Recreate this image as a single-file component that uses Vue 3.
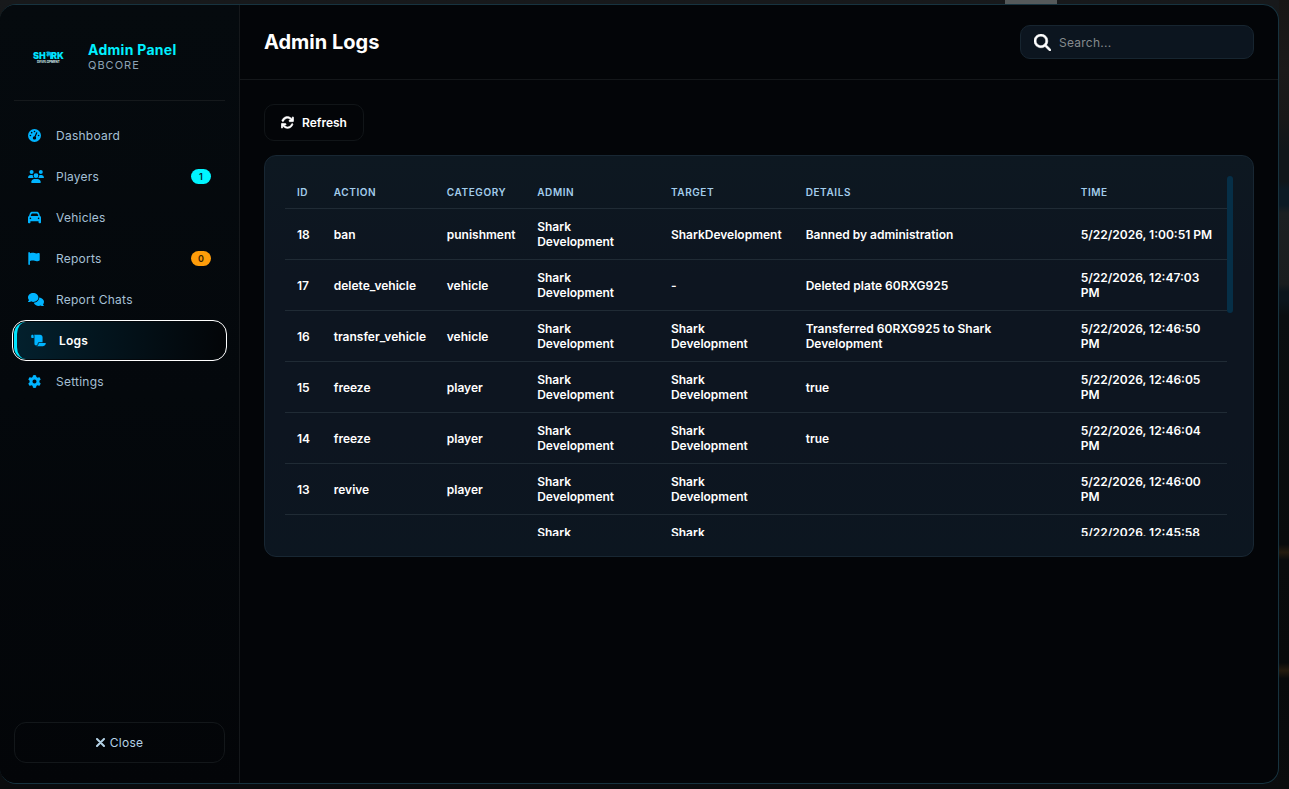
<script setup>
import { ref, computed } from 'vue'

const search = ref('')
const active = ref('Logs')

const nav = [
  { label: 'Dashboard', icon: 'gauge' },
  { label: 'Players', icon: 'users', badge: 1, tone: 'cyan' },
  { label: 'Vehicles', icon: 'car' },
  { label: 'Reports', icon: 'flag', badge: 0, tone: 'orange' },
  { label: 'Report Chats', icon: 'chats' },
  { label: 'Logs', icon: 'scroll' },
  { label: 'Settings', icon: 'gear' },
]

const columns = ['ID', 'Action', 'Category', 'Admin', 'Target', 'Details', 'Time']

const shark = 'Shark Development'
const logs = [
  [18, 'ban', 'punishment', shark, 'SharkDevelopment', 'Banned by administration', '5/22/2026, 1:00:51 PM'],
  [17, 'delete_vehicle', 'vehicle', shark, '-', 'Deleted plate 60RXG925', '5/22/2026, 12:47:03 PM'],
  [16, 'transfer_vehicle', 'vehicle', shark, shark, 'Transferred 60RXG925 to Shark Development', '5/22/2026, 12:46:50 PM'],
  [15, 'freeze', 'player', shark, shark, 'true', '5/22/2026, 12:46:05 PM'],
  [14, 'freeze', 'player', shark, shark, 'true', '5/22/2026, 12:46:04 PM'],
  [13, 'revive', 'player', shark, shark, '', '5/22/2026, 12:46:00 PM'],
  [12, 'warn', 'player', shark, shark, '', '5/22/2026, 12:45:58 PM'],
]

const rows = computed(() => {
  const q = search.value.trim().toLowerCase()
  return q ? logs.filter((r) => r.join(' ').toLowerCase().includes(q)) : logs
})
</script>

<template>
  <div class="scene">
    <div class="panel">
      <aside class="sidebar">
        <header class="brand">
          <svg class="logo" viewBox="0 0 48 48" aria-hidden="true">
            <text x="9" y="27" class="logo-main">SH</text>
            <path d="M22 20c3-1 6 0 6 2v5h-2c0-2 0-3-1-4l-1 2-2-2 1-1z" fill="#00b8e6" />
            <text x="27" y="27" class="logo-main">RK</text>
            <text x="13" y="31" class="logo-sub">DEVELOPMENT</text>
          </svg>
          <div class="brand-text">
            <div class="brand-name">Admin Panel</div>
            <div class="brand-sub">QBCORE</div>
          </div>
        </header>

        <nav class="nav">
          <button
            v-for="item in nav"
            :key="item.label"
            type="button"
            class="nav-item"
            :class="{ active: active === item.label }"
            @click="active = item.label"
          >
            <span class="nav-icon">
              <svg v-if="item.icon === 'gauge'" width="13" height="13" viewBox="0 0 512 512"><path fill-rule="evenodd" d="M0 256a256 256 0 1 1 512 0A256 256 0 1 1 0 256zM288 96a32 32 0 1 0-64 0 32 32 0 1 0 64 0zM256 416c35 0 64-29 64-64 0-17-7-33-18-45l64-147c5-12 0-26-12-31s-26 0-32 12l-64 147c-36 0-66 28-66 64s29 64 64 64zM176 144a32 32 0 1 0-64 0 32 32 0 1 0 64 0zM96 288a32 32 0 1 0 0-64 32 32 0 1 0 0 64zm352-32a32 32 0 1 0-64 0 32 32 0 1 0 64 0z" /></svg>
              <svg v-else-if="item.icon === 'users'" width="16" height="13" viewBox="0 0 640 512"><path d="M144 0a80 80 0 1 1 0 160A80 80 0 1 1 144 0zM512 0a80 80 0 1 1 0 160A80 80 0 1 1 512 0zM0 299c0-59 48-107 107-107h43c16 0 31 4 44 10-1 7-2 14-2 22 0 38 17 72 43 96H21c-12 0-21-10-21-21zM405 320c27-24 43-58 43-96 0-8-1-15-2-22 14-6 29-10 44-10h43c59 0 107 48 107 107 0 12-10 21-21 21zM224 224a96 96 0 1 1 192 0 96 96 0 1 1-192 0zM128 485c0-73 60-133 133-133h117c74 0 134 60 134 133 0 15-12 27-27 27H155c-15 0-27-12-27-27z" /></svg>
              <svg v-else-if="item.icon === 'car'" width="13" height="13" viewBox="0 0 512 512"><path fill-rule="evenodd" d="M135 117l-30 75h302l-30-75c-4-12-16-21-30-21H165c-14 0-26 9-30 21zM40 197l36-104c14-37 49-61 89-61h182c40 0 75 24 89 61l36 104c24 10 40 32 40 59v192c0 18-14 32-32 32h-32c-18 0-32-14-32-32v-48H96v48c0 18-14 32-32 32H32c-18 0-32-14-32-32V256c0-27 16-49 40-59zM128 288a32 32 0 1 0-64 0 32 32 0 1 0 64 0zm288 32a32 32 0 1 0 0-64 32 32 0 1 0 0 64z" /></svg>
              <svg v-else-if="item.icon === 'flag'" width="12" height="13" viewBox="0 0 448 512"><path d="M64 32C64 14 50 0 32 0S0 14 0 32v448c0 18 14 32 32 32s32-14 32-32V352l64-16c41-10 85-6 123 13 44 22 96 25 142 8l35-13c12-5 21-17 21-30V66c0-23-24-38-45-28l-10 5c-46 23-100 23-147 0-35-18-76-22-114-13L64 48V32z" /></svg>
              <svg v-else-if="item.icon === 'chats'" width="16" height="13" viewBox="0 0 640 512"><path d="M208 352c115 0 208-79 208-176S323 0 208 0 0 79 0 176c0 39 15 74 40 103-4 9-9 18-14 25-5 8-10 14-14 18l-6 6c-6 5-8 12-5 19s8 11 15 11c29 0 57-8 81-17 12-5 23-10 33-16 24 17 50 27 78 27z" /><path d="M448 176c0 112-99 196-219 207 25 75 108 129 203 129 28 0 54-5 78-13 10 6 21 11 33 16 24 9 52 17 81 17 7 0 13-5 15-11s0-14-5-19l-6-6c-4-4-9-10-14-18-5-7-10-16-14-25 25-29 40-64 40-103 0-93-86-169-195-176 2 7 3 13 3 24z" /></svg>
              <svg v-else-if="item.icon === 'scroll'" width="15" height="13" viewBox="0 0 576 512"><path d="M0 80v48c0 18 14 32 32 32h64V80c0-27-22-48-48-48S0 53 0 80zM112 32c10 13 16 30 16 48v304c0 35 29 64 64 64s64-29 64-64v-5c0-33 26-59 59-59h133V128c0-53-43-96-96-96zM464 480c62 0 112-50 112-112 0-9-7-16-16-16H315c-15 0-27 12-27 27v5c0 53-43 96-96 96z" /></svg>
              <svg v-else width="13" height="13" viewBox="0 0 512 512"><path fill-rule="evenodd" d="M496 167c3 8 0 18-6 23l-43 40a195 195 0 0 1 0 52l43 40c6 5 9 15 6 23-5 12-10 23-16 34l-5 8c-6 11-14 22-22 32-5 7-15 9-23 6l-56-17c-13 10-28 19-44 25l-12 57c-2 8-9 15-17 16a258 258 0 0 1-90 0c-8-1-15-8-17-16l-12-57c-16-6-31-15-44-25l-56 17c-8 3-18 1-23-6-8-10-16-21-22-32l-5-8c-6-11-11-22-16-34-3-8 0-18 6-23l43-40a195 195 0 0 1 0-52l-43-40c-6-5-9-15-6-23 5-12 10-23 16-34l5-8c6-11 14-22 22-32 5-7 15-9 23-6l56 17c13-10 28-19 44-25l12-57c2-8 9-15 17-16a258 258 0 0 1 90 0c8 1 15 8 17 16l12 57c16 6 31 15 44 25l56-17c8-3 18-1 23 6 8 10 16 21 22 32l5 8c6 11 11 22 16 34zM256 336a80 80 0 1 0 0-160 80 80 0 1 0 0 160z" /></svg>
            </span>
            <span class="nav-label">{{ item.label }}</span>
            <span v-if="item.tone" class="badge" :class="item.tone">{{ item.badge }}</span>
          </button>
        </nav>

        <button type="button" class="close">
          <svg width="9" height="9" viewBox="0 0 9 9" aria-hidden="true"><path d="M1 1l7 7M8 1L1 8" stroke="currentColor" stroke-width="2" stroke-linecap="round" /></svg>
          Close
        </button>
      </aside>

      <main class="main">
        <header class="topbar">
          <h1>Admin Logs</h1>
          <label class="search">
            <svg width="17" height="17" viewBox="0 0 512 512" aria-hidden="true"><path fill-rule="evenodd" d="M416 208c0 46-15 88-40 123l127 126c12 13 12 33 0 46s-33 12-46 0L331 376a208 208 0 1 1 85-168zM208 352a144 144 0 1 0 0-288 144 144 0 1 0 0 288z" stroke="currentColor" stroke-width="16" /></svg>
            <input v-model="search" type="text" placeholder="Search..." aria-label="Search" />
          </label>
        </header>

        <section class="content">
          <button type="button" class="refresh">
            <svg width="13" height="13" viewBox="0 0 512 512" aria-hidden="true"><path d="M105 203c9-25 23-48 43-68 60-60 156-60 216-1l25 26h-47c-18 0-32 14-32 32s14 32 32 32h126c18 0 32-14 32-32V64c0-18-14-32-32-32s-32 14-32 32v52l-27-27C322 1 176 1 88 89c-24 25-42 54-53 85-6 17 3 35 19 41s35-4 51-12zM39 289c-18 0-32 14-32 32v127c0 18 14 32 32 32s32-14 32-32v-52l27 27c88 88 231 88 319 0 24-25 42-54 53-85 6-17-3-35-19-41s-35 3-41 19c-9 25-23 48-43 68-60 60-156 60-216 1l-25-26h47c18 0 32-14 32-32s-14-32-32-32z" stroke="currentColor" stroke-width="20" /></svg>
            Refresh
          </button>

          <div class="card">
            <div class="table-scroll">
              <table>
                <colgroup>
                  <col class="c-id" /><col class="c-action" /><col class="c-category" /><col class="c-admin" />
                  <col class="c-target" /><col class="c-details" /><col />
                </colgroup>
                <thead>
                  <tr>
                    <th v-for="c in columns" :key="c" scope="col">{{ c }}</th>
                  </tr>
                </thead>
                <tbody>
                  <tr v-for="row in rows" :key="row[0]">
                    <td v-for="(cell, i) in row" :key="i">{{ cell }}</td>
                  </tr>
                </tbody>
              </table>
            </div>
            <div class="track" aria-hidden="true"><div class="thumb"></div></div>
          </div>
        </section>
      </main>
    </div>
  </div>
</template>

<style>
body {
  background: #0b0d0f;
}
</style>

<style scoped>
* {
  box-sizing: border-box;
}
.scene {
  display: flex;
  height: 100vh;
  padding: 4px 10px 5px 0;
  font-family: Inter, "Liberation Sans", sans-serif;
  color: #fff;
  background:
    linear-gradient(90deg, transparent 78%, #555a5b 78%, #555a5b 82%, transparent 82%) top left / 100% 4px no-repeat,
    linear-gradient(180deg, #171615 0, #1b1a1a 9%, #181818 15%, #10161a 19%, #10161a 23%, #0c1a24 24%, #0c1a24 26%, #1c2022 27%, #1a1d1f 36%, #0b151c 37%, #0b151c 38%, #0a0e10 40%, #090b0c 69%, #241b0e 70%, #090b0c 71%, #080a0b 84%, #241b0e 85%, #080a0b 86%, #0a0c0d 100%) right / 10px 100% no-repeat,
    linear-gradient(180deg, #17191b, #0a0c0e);
}
button,
input {
  font: inherit;
  color: inherit;
}
button {
  cursor: pointer;
}
svg {
  fill: currentColor;
  flex: none;
}
.panel {
  flex: 1;
  display: flex;
  min-width: 0;
  overflow: hidden;
  border: 1px solid #17333f;
  border-left: 0;
  border-radius: 16px;
  background: #030508;
}
.sidebar {
  flex: none;
  display: flex;
  flex-direction: column;
  width: 240px;
  padding: 19px 14px 20px;
  border-right: 1px solid #15181b;
  background: linear-gradient(180deg, #050a0e, #04080c 50%, #030508);
}
.brand {
  display: flex;
  align-items: center;
  gap: 16px;
  padding: 8px 10px 20px;
  border-bottom: 1px solid #15191c;
}
.brand-text {
  display: flex;
  flex-direction: column;
  gap: 1px;
}
.logo {
  width: 48px;
  height: 48px;
}
.logo-main {
  fill: #00e5ff;
  font-size: 9px;
  font-weight: 900;
}
.logo-sub {
  fill: #d5edf5;
  font-size: 3px;
  font-weight: 700;
}
.brand-name {
  font-size: 14px;
  line-height: 17px;
  font-weight: 700;
  letter-spacing: 0.02em;
  color: #00f0ff;
}
.brand-sub {
  font-size: 11px;
  line-height: 13px;
  letter-spacing: 1px;
  color: #8da3b5;
}
.nav {
  flex: 1;
  display: flex;
  flex-direction: column;
  gap: 4px;
  padding-top: 16px;
}
.nav-item {
  display: flex;
  align-items: center;
  gap: 12px;
  height: 37px;
  padding: 0 14px;
  border: 0;
  border-radius: 12px;
  background: none;
  font-size: 12px;
  letter-spacing: 0.02em;
  color: #a6c0d6;
  text-align: left;
}
.nav-icon {
  display: flex;
  width: 16px;
  color: #00b4ff;
}
.nav-label {
  flex: 1;
}
.nav-item.active {
  border-left: 3px solid #00e5ff;
  background: linear-gradient(90deg, #03202d, #030a0f 80%, #030508);
  color: #fff;
  font-weight: 600;
  outline: 1px solid #fff;
  outline-offset: 1px;
}
.badge {
  min-width: 20px;
  border-radius: 8px;
  font-size: 9px;
  line-height: 15px;
  font-weight: 600;
  text-align: center;
  color: #02222b;
}
.badge.cyan {
  background: #00f5ff;
}
.badge.orange {
  background: #ff9d0a;
  color: #3a2300;
}
.close {
  display: flex;
  align-items: center;
  justify-content: center;
  gap: 5px;
  height: 41px;
  border: 1px solid #13171a;
  border-radius: 12px;
  background: transparent;
  font-size: 12px;
  letter-spacing: 0.02em;
  color: #b5d2e6;
}
.main {
  flex: 1;
  min-width: 0;
}
.topbar {
  display: flex;
  align-items: center;
  justify-content: space-between;
  height: 75px;
  padding: 0 24px;
  border-bottom: 1px solid #14171a;
}
h1 {
  margin: 0;
  font-size: 20px;
  line-height: 24px;
  font-weight: 700;
}
.search {
  display: flex;
  align-items: center;
  gap: 8px;
  width: 234px;
  height: 34px;
  padding: 0 13px;
  border: 1px solid #172530;
  border-radius: 10px;
  background: #0c151f;
}
.search input {
  flex: 1;
  min-width: 0;
  padding: 0;
  border: 0;
  outline: 0;
  background: none;
  font-size: 12px;
  letter-spacing: 0.02em;
}
.search input::placeholder {
  color: #858a8e;
}
.content {
  padding: 24px;
}
.refresh {
  display: flex;
  align-items: center;
  gap: 8px;
  height: 37px;
  padding: 0 16px;
  border: 1px solid #111518;
  border-radius: 10px;
  background: transparent;
  font-size: 12px;
  font-weight: 600;
}
.card {
  display: flex;
  margin-top: 14px;
  padding: 20px;
  border: 1px solid #182733;
  border-radius: 12px;
  background: linear-gradient(180deg, #0d1821, #0d1520 30%, #0d1520 70%, #0c1620);
}
.table-scroll {
  flex: 1;
  height: 360px;
  overflow-y: auto;
  scrollbar-width: none;
}
.track {
  width: 6px;
}
.thumb {
  height: 38%;
  border-radius: 3px;
  background: #062f47;
}
table {
  width: 100%;
  table-layout: fixed;
  border-collapse: separate;
  border-spacing: 0;
}
.c-id { width: 3.9%; }
.c-action { width: 12%; }
.c-category { width: 9.6%; }
.c-admin { width: 14.2%; }
.c-target { width: 14.3%; }
.c-details { width: 29.2%; }
th {
  height: 33px;
  padding: 0 12px;
  border-bottom: 1px solid #202b35;
  font-size: 10px;
  font-weight: 600;
  letter-spacing: 0.06em;
  text-align: left;
  text-transform: uppercase;
  color: #a3cdec;
}
td {
  height: 51px;
  padding: 10px 12px;
  border-bottom: 1px solid #202b35;
  font-size: 12px;
  line-height: 15px;
  font-weight: 600;
  vertical-align: middle;
}
</style>
